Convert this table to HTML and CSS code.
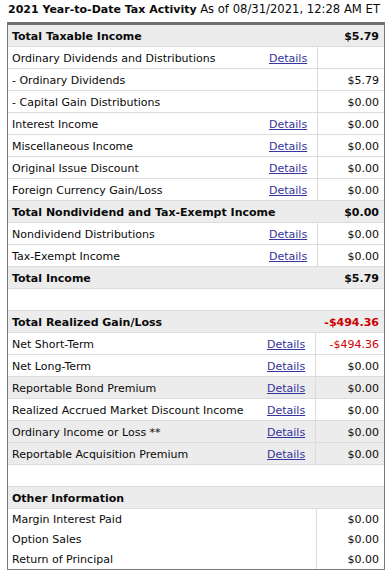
FILE: index.html
```html
<!DOCTYPE html>
<html>
<head>
<meta charset="utf-8">
<link rel="stylesheet" href="styles.css">
</head>
<body>
<div class="panel">
  <div class="title"><span class="title-main">2021 Year-to-Date Tax Activity</span> <span class="title-sub">As of 08/31/2021, 12:28 AM ET</span></div>
  <div class="box">
    <table class="sec sec1">
      <colgroup><col><col class="c-det"><col class="c-amt"></colgroup>
      <tr class="head"><td colspan="2">Total Taxable Income</td><td class="amt">$5.79</td></tr>
      <tr><td>Ordinary Dividends and Distributions</td><td class="det"><a href="#">Details</a></td><td class="amt v"></td></tr>
      <tr><td>- Ordinary Dividends</td><td class="det"></td><td class="amt v">$5.79</td></tr>
      <tr><td>- Capital Gain Distributions</td><td class="det"></td><td class="amt v">$0.00</td></tr>
      <tr><td>Interest Income</td><td class="det"><a href="#">Details</a></td><td class="amt v">$0.00</td></tr>
      <tr><td>Miscellaneous Income</td><td class="det"><a href="#">Details</a></td><td class="amt v">$0.00</td></tr>
      <tr><td>Original Issue Discount</td><td class="det"><a href="#">Details</a></td><td class="amt v">$0.00</td></tr>
      <tr><td>Foreign Currency Gain/Loss</td><td class="det"><a href="#">Details</a></td><td class="amt v">$0.00</td></tr>
      <tr class="head"><td colspan="2">Total Nondividend and Tax-Exempt Income</td><td class="amt">$0.00</td></tr>
      <tr><td>Nondividend Distributions</td><td class="det"><a href="#">Details</a></td><td class="amt v">$0.00</td></tr>
      <tr><td>Tax-Exempt Income</td><td class="det"><a href="#">Details</a></td><td class="amt v">$0.00</td></tr>
      <tr class="head"><td colspan="2">Total Income</td><td class="amt">$5.79</td></tr>
      <tr class="blank"><td colspan="3"></td></tr>
    </table>
    <table class="sec sec2">
      <colgroup><col><col class="c-det"><col class="c-amt"></colgroup>
      <tr class="head"><td colspan="2">Total Realized Gain/Loss</td><td class="amt neg">-$494.36</td></tr>
      <tr><td>Net Short-Term</td><td class="det"><a href="#">Details</a></td><td class="amt v neg">-$494.36</td></tr>
      <tr><td>Net Long-Term</td><td class="det"><a href="#">Details</a></td><td class="amt v">$0.00</td></tr>
      <tr class="alt"><td>Reportable Bond Premium</td><td class="det"><a href="#">Details</a></td><td class="amt v">$0.00</td></tr>
      <tr><td>Realized Accrued Market Discount Income</td><td class="det"><a href="#">Details</a></td><td class="amt v">$0.00</td></tr>
      <tr class="alt"><td>Ordinary Income or Loss **</td><td class="det"><a href="#">Details</a></td><td class="amt v">$0.00</td></tr>
      <tr class="alt"><td>Reportable Acquisition Premium</td><td class="det"><a href="#">Details</a></td><td class="amt v">$0.00</td></tr>
      <tr class="blank"><td colspan="3"></td></tr>
    </table>
    <table class="sec sec3">
      <colgroup><col><col class="c-amt"></colgroup>
      <tr class="head"><td colspan="2">Other Information</td></tr>
      <tr class="plain"><td>Margin Interest Paid</td><td class="amt v">$0.00</td></tr>
      <tr class="plain"><td>Option Sales</td><td class="amt v">$0.00</td></tr>
      <tr class="plain"><td>Return of Principal</td><td class="amt v">$0.00</td></tr>
    </table>
  </div>
</div>
</body>
</html>
```

FILE: styles.css
```css
html, body {
  margin: 0;
  padding: 0;
  background: #fff;
}
body {
  font-family: "DejaVu Sans", Verdana, sans-serif;
  font-size: 11px;
  color: #0a0a0a;
}
.panel {
  padding: 0 7px 0 7px;
  width: 378px;
}
.title {
  height: 22px;
  line-height: 19px;
  padding-left: 1px;
  white-space: nowrap;
}
.title-main {
  font-weight: bold;
  font-size: 11px;
}
.title-sub {
  font-size: 11.6px;
}
.box {
  border-top: 3px solid #6e6e6e;
  border-left: 1px solid #7a7a7a;
  border-right: 1px solid #7a7a7a;
  border-bottom: 1px solid #7a7a7a;
}
.sec {
  width: 100%;
  border-collapse: collapse;
  table-layout: fixed;
}
.sec td {
  height: 20px;
  padding: 1px 0 0 4px;
  border-bottom: 1px solid #dcdcdc;
  white-space: nowrap;
  vertical-align: middle;
}
.sec1 .c-det { width: 52px; }
.sec1 .c-amt { width: 67px; }
.sec2 .c-det { width: 52px; }
.sec2 .c-amt { width: 69px; }
.sec3 .c-amt { width: 68px; }
.head td {
  background: #ececec;
  font-weight: bold;
}
.alt td {
  background: #ececec;
}
.det {
  text-align: right;
  padding-right: 10px !important;
}
.det a {
  color: #34349c;
  text-decoration: underline;
}
.amt {
  text-align: right;
  padding-right: 5px !important;
}
.v {
  border-left: 1px solid #dcdcdc;
}
.neg {
  color: #cc0000;
}
.blank td {
  background: #fff;
}
.plain td {
  border-bottom: none;
  height: 19px;
}
```
